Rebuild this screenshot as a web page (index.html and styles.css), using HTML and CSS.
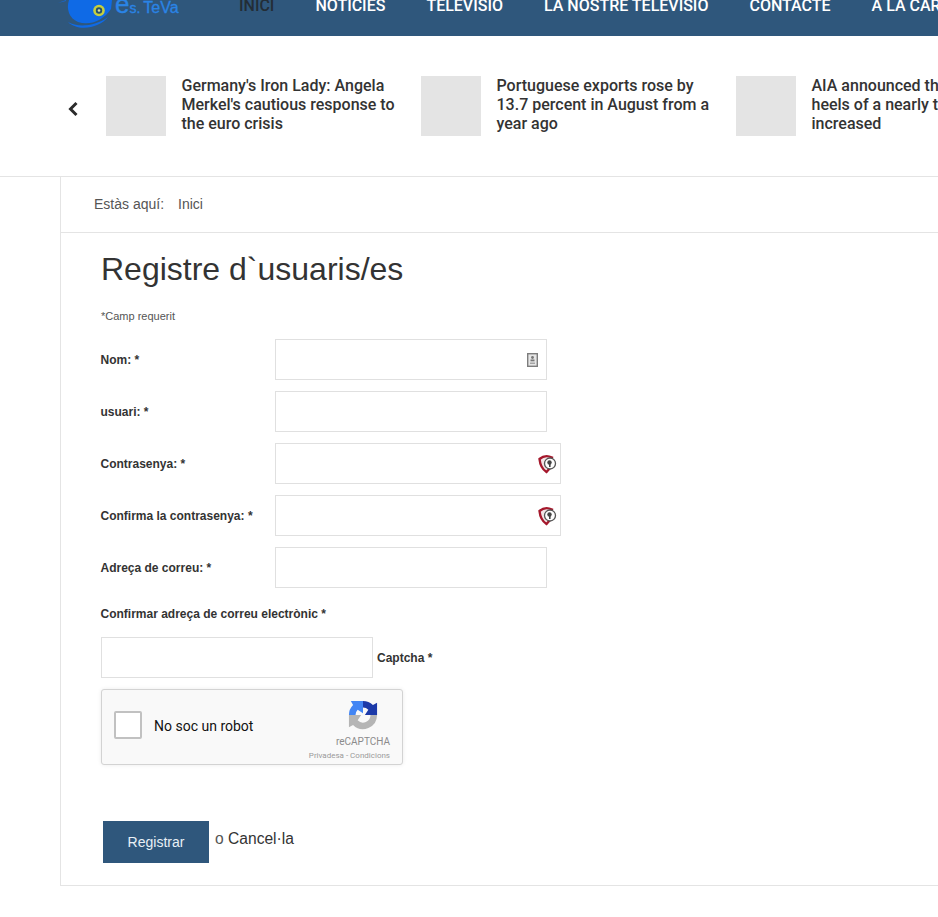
FILE: index.html
```html
<!DOCTYPE html>
<html lang="ca">
<head>
<meta charset="utf-8">
<title>Registre d'usuaris/es</title>
<link rel="stylesheet" href="styles.css">
</head>
<body>
<header class="topbar">
  <svg class="logo" width="128" height="36" viewBox="0 0 128 36" aria-hidden="true">
    <path d="M2 3 L10 0 L10 1 Z" fill="#1668d6"/>
    <path d="M13 0 C10 9 13 18 22 22 C33 26 47 21 55 9 L56 0 Z" fill="#0f6ae6"/>
    <path d="M12 22 C22 28 40 26 52 17 C44 28 22 32 12 22 Z" fill="#0f6ae6"/>
    <circle cx="43" cy="10.500" r="5.800" fill="#c6cf3f"/>
    <circle cx="43" cy="10.500" r="3.200" fill="#24506e"/>
    <circle cx="43" cy="10.500" r="1.300" fill="#d9e0a0"/>
    <text class="logo-text" x="59" y="13"><tspan class="logo-e">e</tspan><tspan class="logo-s">s.</tspan><tspan class="logo-te" dx="3">Te</tspan><tspan>Va</tspan></text>
  </svg>
  <nav class="menu">
    <a class="menu-item active">INICI</a>
    <a class="menu-item">NOTÍCIES</a>
    <a class="menu-item">TELEVISIÓ</a>
    <a class="menu-item">LA NOSTRE TELEVISIÓ</a>
    <a class="menu-item">CONTACTE</a>
    <a class="menu-item">A LA CARTA</a>
  </nav>
</header>

<section class="ticker">
  <svg class="chev" width="12" height="16" viewBox="0 0 12 16" aria-hidden="true"><path d="M9.500 2 L3.500 8 L9.500 14" fill="none" stroke="#2b2b2b" stroke-width="3"/></svg>
  <article class="story"><div class="thumb"></div><p>Germany's Iron Lady: Angela Merkel's cautious response to the euro crisis</p></article>
  <article class="story"><div class="thumb"></div><p>Portuguese exports rose by 13.7 percent in August from a year ago</p></article>
  <article class="story"><div class="thumb"></div><p>AIA announced this on the heels of a nearly two percent increased</p></article>
</section>

<main class="panel">
  <div class="crumbs"><span>Estàs aquí:</span><span>Inici</span></div>
  <div class="content">
    <h1>Registre d`usuaris/es</h1>
    <p class="req">*Camp requerit</p>
    <form class="form">
      <div class="row"><label>Nom: *</label>
        <div class="input">
          <svg class="ico-card" width="11" height="14" viewBox="0 0 11 14" aria-hidden="true"><rect x="0.700" y="0.700" width="9.600" height="12.600" fill="#e6e6e6" stroke="#7d7d7d" stroke-width="1.400"/><circle cx="5.500" cy="4.500" r="1.400" fill="#777"/><rect x="3.500" y="6.500" width="4" height="1.800" fill="#777"/><rect x="3" y="9.500" width="5" height="1.500" fill="#a5a5a5"/></svg>
        </div>
      </div>
      <div class="row"><label>usuari: *</label><div class="input"></div></div>
      <div class="row"><label>Contrasenya: *</label>
        <div class="input wide">
          <svg class="ico-key" width="20" height="20" viewBox="0 0 20 20" aria-hidden="true"><path d="M1.500 5 C5 2 10 1.500 14 3.500 L12 14 L8.500 18 C4.500 15.500 2 10 1.500 5 Z" fill="#f3e4e6" stroke="#a5182c" stroke-width="2.400"/><circle cx="12" cy="9.500" r="5.500" fill="#fff" stroke="#555" stroke-width="1.300"/><circle cx="11.500" cy="8.500" r="2.200" fill="#444"/><rect x="11" y="9" width="1.600" height="4" fill="#444"/></svg>
        </div>
      </div>
      <div class="row"><label>Confirma la contrasenya: *</label>
        <div class="input wide">
          <svg class="ico-key" width="20" height="20" viewBox="0 0 20 20" aria-hidden="true"><path d="M1.500 5 C5 2 10 1.500 14 3.500 L12 14 L8.500 18 C4.500 15.500 2 10 1.500 5 Z" fill="#f3e4e6" stroke="#a5182c" stroke-width="2.400"/><circle cx="12" cy="9.500" r="5.500" fill="#fff" stroke="#555" stroke-width="1.300"/><circle cx="11.500" cy="8.500" r="2.200" fill="#444"/><rect x="11" y="9" width="1.600" height="4" fill="#444"/></svg>
        </div>
      </div>
      <div class="row"><label>Adreça de correu: *</label><div class="input"></div></div>
      <div class="label-only"><label>Confirmar adreça de correu electrònic *</label></div>
      <div class="row-inline"><div class="input short"></div><label>Captcha *</label></div>
      <div class="captcha">
        <div class="check"></div>
        <span class="robot">No soc un robot</span>
        <div class="brand">
          <svg width="30" height="30" viewBox="0 0 32 32" aria-hidden="true">
            <path d="M16 1 A15 15 0 0 1 26.600 5.400 L31 3 L31 16 L18 16 L21.700 10.300 A8 8 0 0 0 16 8 Z" fill="#1c3aa9"/>
            <path d="M1 16 A15 15 0 0 1 5.400 5.400 L3 1 L16 1 L16 14 L10.300 10.300 A8 8 0 0 0 8 16 Z" fill="#4285f4"/>
            <path d="M1 16 L14 16 L10.300 21.700 A8 8 0 0 0 24 16 L31 16 A15 15 0 0 1 5.400 26.600 L1 29 Z" fill="#b5b5b5"/>
          </svg>
          <span class="rc">reCAPTCHA</span>
          <span class="rc-links">Privadesa - Condicions</span>
        </div>
      </div>
      <div class="actions">
        <button class="submit" type="button">Registrar</button>
        <span class="cancel"><span class="or">o</span> Cancel·la</span>
      </div>
    </form>
  </div>
</main>
</body>
</html>
```
FILE: styles.css
```css
* { box-sizing: border-box; }
html, body { margin: 0; padding: 0; }
body { width: 938px; height: 917px; overflow: hidden; background: #fff; font-family: "Liberation Sans", Arial, sans-serif; color: #333; }

.topbar { height: 36px; background: #2f577c; display: flex; align-items: flex-start; padding-left: 56px; overflow: hidden; white-space: nowrap; }
.logo { flex: none; display: block; }
.logo-text { font: 400 16px "Liberation Sans", sans-serif; fill: #2a84e6; stroke: #2a84e6; stroke-width: 0.300px; }
.logo-e { font-size: 26px; }
.logo-s { font-size: 14px; }
.logo-te { font-size: 16px; }
.menu { display: flex; gap: 41px; margin-left: 55px; margin-top: -3px; }
.menu-item { font: 500 16px/18px Roboto, sans-serif; color: #fff; }
.menu-item.active { color: #232d36; }

.ticker { height: 141px; display: flex; align-items: flex-start; padding: 40px 0 0 67px; overflow: hidden; border-bottom: 1px solid #e4e4e4; }
.chev { flex: none; margin: 25px 27px 0 0; }
.story { flex: none; width: 315px; display: flex; gap: 15.500px; }
.thumb { flex: none; width: 60px; height: 60px; background: #e4e4e4; }
.story p { margin: 0; width: 215px; font: 500 16px/19px Roboto, sans-serif; color: #333; flex: none; }

.panel { margin-left: 60px; height: 709px; border-left: 1px solid #e4e4e4; border-bottom: 1px solid #e4e4e4; }
.crumbs { height: 56px; border-bottom: 1px solid #e4e4e4; display: flex; gap: 14px; align-items: center; padding: 0 0 2px 33px; font-size: 14px; color: #555; }
.content { padding: 0 0 0 40px; }
h1 { margin: 16px 0 0; font: 400 32px/40px "Liberation Sans", sans-serif; color: #333; }
.req { margin: 21px 0 0; font-size: 11px; line-height: 13px; color: #555; }

.form { margin-top: 16px; }
.form label { font-size: 12px; font-weight: 700; color: #333; margin-left: -0.500px; }
.row { display: flex; align-items: center; height: 41px; margin-bottom: 11px; }
.row label { width: 174.500px; flex: none; }
.input { width: 272px; height: 41px; border: 1px solid #e0e0e0; display: flex; align-items: center; justify-content: flex-end; }
.input.wide { width: 286px; }
.input.short { width: 272px; margin-right: 4.500px; }
.ico-card { margin-right: 8px; }
.ico-key { margin-right: 2px; }
.label-only { height: 30px; display: flex; align-items: center; margin-bottom: 8px; }
.row-inline { display: flex; align-items: center; height: 41px; }

.captcha { width: 302px; height: 76px; margin-top: 11px; background: #f9f9f9; border: 1px solid #d3d3d3; border-radius: 3px; box-shadow: 0 0 4px rgba(0,0,0,.08); display: flex; }
.check { width: 28px; height: 28px; margin: 21px 0 0 12px; background: #fff; border: 2px solid #c1c1c1; border-radius: 2px; flex: none; }
.robot { margin: 28px 0 0 12px; font: 400 14px/17px Roboto, sans-serif; color: #111; }
.brand { margin-left: auto; width: 84px; margin-right: 12px; display: flex; flex-direction: column; align-items: flex-end; padding-top: 10px; }
.brand svg { margin-right: 12px; display: block; }
.rc { font: 400 10px/12px Roboto, sans-serif; color: #8b8b8b; margin-top: 6px; }
.rc-links { font: 400 8px/10px Roboto, sans-serif; color: #9a9a9a; margin-top: 3px; white-space: nowrap; }

.actions { display: flex; align-items: flex-start; margin-top: 56px; margin-left: 2px; }
.submit { width: 106px; height: 42px; background: #2f577c; border: 0; color: #e8f0f6; font: 400 14px "Liberation Sans", sans-serif; padding: 0; }
.cancel { margin: 8px 0 0 6px; font-size: 15.600px; line-height: 19px; color: #333; }
.or { color: #555; }
```
